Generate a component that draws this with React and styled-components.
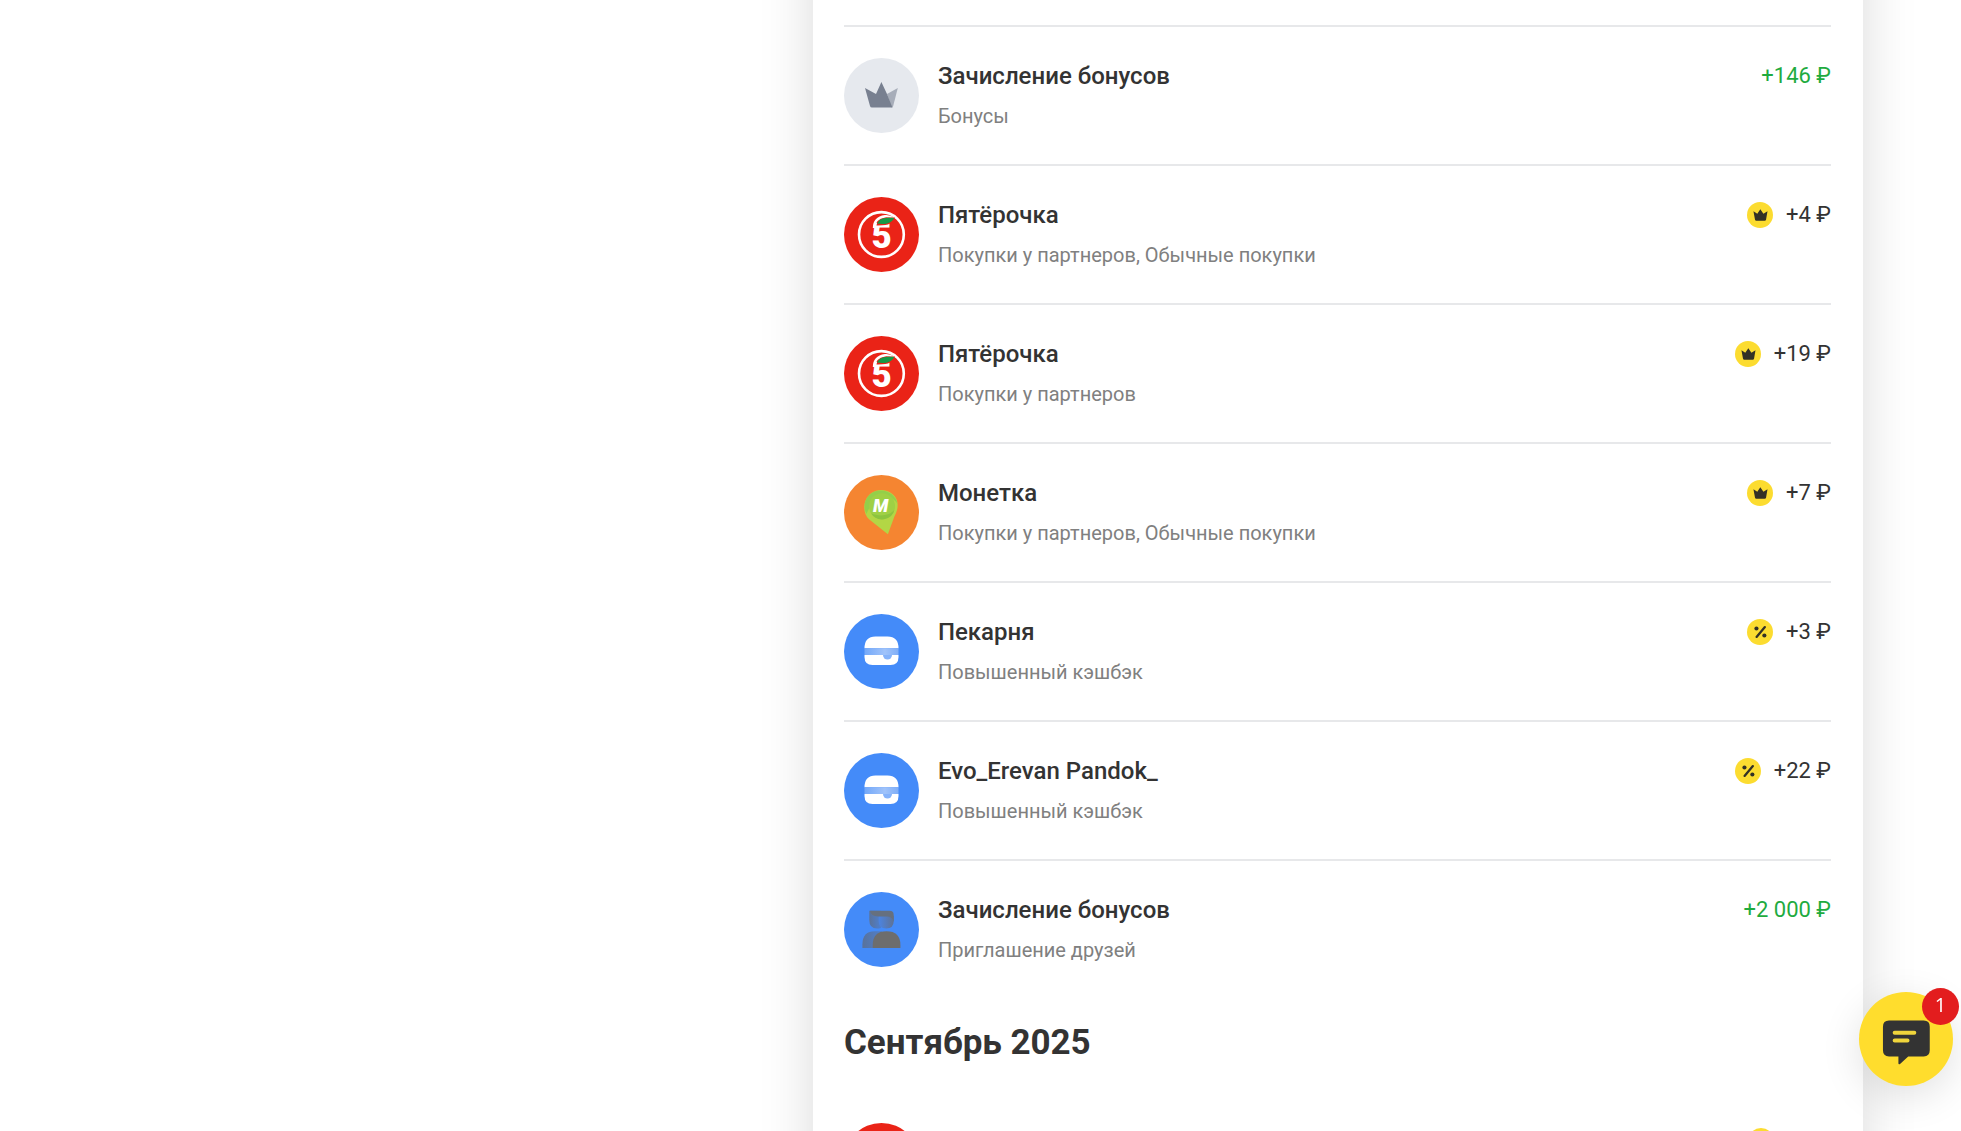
import React from 'react';
import styled, { createGlobalStyle } from 'styled-components';

const GlobalStyle = createGlobalStyle`
  *, *::before, *::after { box-sizing: border-box; }
  body {
    margin: 0;
    background: #fff;
    color: #333;
    font-family: Roboto, "Liberation Sans", sans-serif;
  }
`;

const Page = styled.div`
  display: flex;
  justify-content: flex-end;
  align-items: flex-start;
  height: 100vh;
  padding: 0 5%;
  overflow: hidden;
`;

/* The feed is scrolled: the panel starts above the visible area. */
const Panel = styled.main`
  flex: 0 1 1050px;
  min-width: 0;
  margin-top: -80px;
  padding: 105px 32px 31px 31px;
  background: #fff;
  box-shadow: 0 0 50px rgba(0, 0, 0, 0.15);
`;

const List = styled.ul`
  margin: 0;
  padding: 0;
  list-style: none;
`;

const Row = styled.li`
  display: flex;
  align-items: flex-start;
  gap: 19px;
  padding: 31px 0;
  border-top: ${({ $divided }) => ($divided ? '2px solid #e7e8ea' : 'none')};
`;

const Avatar = styled.svg`
  display: block;
  flex: none;
  width: 75px;
  height: 75px;
`;

const Info = styled.div`
  display: flex;
  flex: 1;
  flex-direction: column;
  gap: 8px;
  min-width: 0;
`;

const Title = styled.h3`
  margin: 0;
  font-size: 24px;
  font-weight: 500;
  line-height: 36px;
`;

const Category = styled.p`
  margin: 0;
  color: #808080;
  font-size: 20px;
  line-height: 28px;
`;

const Amount = styled.div`
  display: flex;
  align-items: center;
  gap: 13px;
  min-height: 36px;
  color: ${({ $credit }) => ($credit ? '#1fab3f' : '#333')};
  font-size: 22px;
  line-height: 36px;
  white-space: nowrap;
`;

const Value = styled.span`
  min-width: 44px;
  text-align: right;
`;

const BonusIcon = styled.svg`
  display: block;
  width: 26px;
  height: 26px;
`;

const Month = styled.h2`
  margin: 0;
  padding: 23px 0 27px;
  font-size: 35px;
  font-weight: 700;
  line-height: 44px;
`;

const ChatButton = styled.button`
  position: fixed;
  right: 8px;
  bottom: 45px;
  width: 94px;
  height: 94px;
  padding: 0;
  border: 0;
  border-radius: 50%;
  background: #ffdd2d;
  box-shadow: 0 10px 40px rgba(0, 0, 0, 0.12);
  cursor: pointer;
`;

const ChatIcon = styled.svg`
  display: block;
  width: 94px;
  height: 94px;
`;

const Unread = styled.span`
  position: absolute;
  top: -4px;
  right: -6px;
  width: 37px;
  height: 37px;
  border-radius: 50%;
  background: #e31d1e;
  color: #fff;
  font-family: "Open Sans", sans-serif;
  font-size: 20px;
  line-height: 34px;
  text-align: center;
`;

const LogoText = styled.text`
  fill: #fff;
  font-family: Roboto, sans-serif;
  font-size: ${({ $size }) => $size}px;
  font-style: ${({ $slanted }) => ($slanted ? 'italic' : 'normal')};
  font-weight: 900;
  text-anchor: middle;
`;

function CrownLogo() {
  return (
    <Avatar viewBox="0 0 75 75" aria-hidden="true">
      <circle cx="37.5" cy="37.5" r="37.5" fill="#e6e9ee" />
      <path d="M43 36L53.8 30 49.2 48Q48.8 49.5 47.5 49.5z" fill="#a7adb9" />
      <path d="M21 30L32 36 37.4 24 43 36 48.4 49.5H28Q26.4 49.5 26 48z" fill="#788090" />
    </Avatar>
  );
}

function FiveLogo() {
  return (
    <Avatar viewBox="0 0 75 75" aria-hidden="true">
      <circle cx="37.5" cy="37.5" r="37.5" fill="#ea2317" />
      <circle cx="37.4" cy="37.5" r="22.4" fill="none" stroke="#fff" strokeWidth="2.6" />
      <path d="M30 31C30 24 34 20.3 41 19.2C44.5 18.8 47.5 20 50 21.5" fill="none" stroke="#fff" strokeWidth="2.4" />
      <LogoText x="37.6" y="51.4" $size="35">5</LogoText>
      <path d="M32.5 28.4C33.5 22.2 39 20.4 51 20.6C49 26.8 45 28.6 32.5 28.4z" fill="#ea2317" />
      <path d="M33 26.6C36 21 41 20.6 50.2 20.9C47.5 26.2 42 27.8 33 26.6z" fill="#159a46" />
    </Avatar>
  );
}

function PinLogo() {
  return (
    <Avatar viewBox="0 0 75 75" aria-hidden="true">
      <circle cx="37.5" cy="37.5" r="37.5" fill="#f58531" />
      <path d="M43.9 59.2L25 44.3C18 37.500 18.800 24 27.500 18C36 12 49.500 15.500 53 25.500C55 33 52 38 50.200 42z" fill="#b3d645" />
      <path d="M22.500 39C18 31 21.500 19.500 31.500 16.200C42 13.500 52 19.500 53.400 29C49 19.500 31 17 22.500 39z" fill="#93cf4a" />
      <circle cx="38" cy="31.3" r="13" fill="#9fd045" />
      <path d="M27 38.300A13 13 0 0 0 50.600 34.500C46 41 35 42 27 38.300z" fill="#8cc43f" />
      <LogoText x="36.6" y="37" $size="18" $slanted>M</LogoText>
    </Avatar>
  );
}

function BurgerLogo() {
  return (
    <Avatar viewBox="0 0 75 75" aria-hidden="true">
      <defs>
        <linearGradient id="filling" x1="0" x2="1">
          <stop offset="0" stopColor="#73a8f9" />
          <stop offset="0.6" stopColor="#a0c3fa" />
          <stop offset="1" stopColor="#7faef8" />
        </linearGradient>
      </defs>
      <circle cx="37.5" cy="37.5" r="37.5" fill="#448bf9" />
      <path d="M20.5 34.2Q20.5 22.4 31.500 22.4H43.500Q54.500 22.4 54.500 34.2z" fill="#fff" />
      <path d="M20.5 41H54.500V43Q54.500 51 46.500 51H28.500Q20.500 51 20.500 43z" fill="#fff" />
      <rect x="20.5" y="34.2" width="34" height="6.8" fill="url(#filling)" />
      <path d="M39 41H48A4.500 4.500 0 0 1 39 41z" fill="#86b3fa" />
    </Avatar>
  );
}

function FriendsLogo() {
  return (
    <Avatar viewBox="0 0 75 75" aria-hidden="true">
      <defs>
        <linearGradient id="backPerson" x1="0" x2="1">
          <stop offset="0" stopColor="#5a7299" />
          <stop offset="1" stopColor="#4d7fd0" />
        </linearGradient>
        <linearGradient id="frontFace" x1="0" x2="1">
          <stop offset="0" stopColor="#4b84e2" />
          <stop offset="1" stopColor="#5f7294" />
        </linearGradient>
      </defs>
      <circle cx="37.5" cy="37.5" r="37.5" fill="#448bf9" />
      <path d="M25.3 18.8H37V36Q35.300 36.500 33 36.500Q25.300 36.500 25.300 28z" fill="url(#backPerson)" />
      <path d="M18.4 56V52.500Q18.400 39.200 31 39.200H38V56z" fill="url(#backPerson)" />
      <path d="M34.7 24H49.700V29Q49.700 36.500 42.200 36.500Q34.700 36.500 34.700 29z" fill="url(#frontFace)" />
      <path d="M26 18.8H45.500Q49.700 18.800 49.700 23V30Q48.500 24.500 43 24.500H34Q27 24.500 26 18.800z" fill="#66707f" />
      <path d="M28.7 56V53Q28.700 39.200 42.500 39.200Q56.400 39.200 56.400 53V56z" fill="#6d6d6d" />
    </Avatar>
  );
}

function CrownBonus() {
  return (
    <BonusIcon viewBox="0 0 25 25" role="img" aria-label="Бонус партнера">
      <circle cx="12.5" cy="12.5" r="12.5" fill="#fcdc30" />
      <path d="M6.2 9L9.9 11.3 12.8 6.9 15.8 11.3 19.7 9 18.3 17Q18.1 18.1 17 18.1H9Q7.9 18.1 7.7 17z" fill="#333126" />
    </BonusIcon>
  );
}

function PercentBonus() {
  return (
    <BonusIcon viewBox="0 0 25 25" role="img" aria-label="Повышенный процент">
      <circle cx="12.5" cy="12.5" r="12.5" fill="#fcdc30" />
      <path d="M17.2 7.8L9.2 17.2" stroke="#333126" strokeWidth="2.2" strokeLinecap="round" />
      <circle cx="9.1" cy="9.1" r="2" fill="#333126" />
      <circle cx="16.7" cy="15.9" r="2" fill="#333126" />
    </BonusIcon>
  );
}

const logos = { crown: CrownLogo, five: FiveLogo, pin: PinLogo, burger: BurgerLogo, friends: FriendsLogo };
const bonuses = { crown: CrownBonus, percent: PercentBonus };

const october = [
  { logo: 'crown', title: 'Зачисление бонусов', category: 'Бонусы', amount: '+146 ₽', credit: true },
  { logo: 'five', title: 'Пятёрочка', category: 'Покупки у партнеров, Обычные покупки', amount: '+4 ₽', bonus: 'crown' },
  { logo: 'five', title: 'Пятёрочка', category: 'Покупки у партнеров', amount: '+19 ₽', bonus: 'crown' },
  { logo: 'pin', title: 'Монетка', category: 'Покупки у партнеров, Обычные покупки', amount: '+7 ₽', bonus: 'crown' },
  { logo: 'burger', title: 'Пекарня', category: 'Повышенный кэшбэк', amount: '+3 ₽', bonus: 'percent' },
  { logo: 'burger', title: 'Evo_Erevan Pandok_', category: 'Повышенный кэшбэк', amount: '+22 ₽', bonus: 'percent' },
  { logo: 'friends', title: 'Зачисление бонусов', category: 'Приглашение друзей', amount: '+2 000 ₽', credit: true },
];

const september = [{ logo: 'five', bonus: 'crown' }];

function Operation({ item, divided }) {
  const Logo = logos[item.logo];
  const Bonus = bonuses[item.bonus];
  return (
    <Row $divided={divided}>
      <Logo />
      <Info>
        {item.title && <Title>{item.title}</Title>}
        {item.category && <Category>{item.category}</Category>}
      </Info>
      <Amount $credit={item.credit}>
        {Bonus && <Bonus />}
        <Value>{item.amount}</Value>
      </Amount>
    </Row>
  );
}

export default function App() {
  return (
    <>
      <GlobalStyle />
      <Page>
        <Panel>
          <List>
            {october.map((item, i) => (
              <Operation key={i} item={item} divided />
            ))}
          </List>
          <Month>Сентябрь 2025</Month>
          <List>
            {september.map((item, i) => (
              <Operation key={i} item={item} divided={i > 0} />
            ))}
          </List>
        </Panel>
      </Page>
      <ChatButton type="button" aria-label="Открыть чат">
        <ChatIcon viewBox="0 0 93 93" aria-hidden="true">
          <path
            d="M29.7 28.3H64Q70 28.3 70 34.300V57.700Q70 63.700 64 63.700H48.700L40.600 71.200Q39 72.200 39 70.500V63.700H29.700Q23.700 63.700 23.700 57.700V34.300Q23.700 28.300 29.700 28.300z"
            fill="#333"
          />
          <path d="M35.300 40.300H54.700M35.300 48H48" stroke="#f0d53c" strokeWidth="4" strokeLinecap="round" />
        </ChatIcon>
        <Unread>1</Unread>
      </ChatButton>
    </>
  );
}
